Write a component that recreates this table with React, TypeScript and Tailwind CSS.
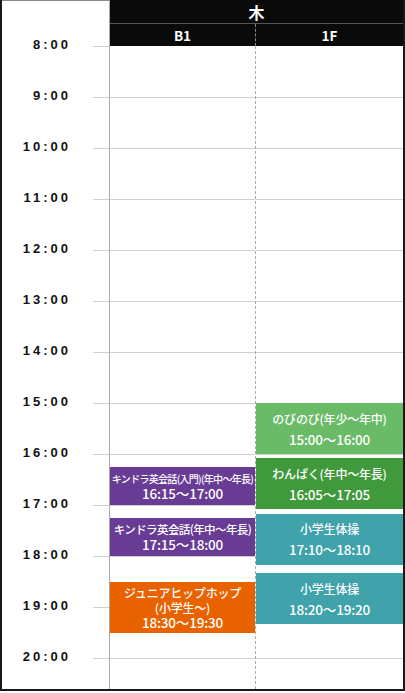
import React from 'react';

type Lesson = {
  title: string[];
  start: string;
  end: string;
  color: string;
  small?: boolean;
};

const HOUR_PX = 51;
const DAY_START = 8 * 60;

const toMin = (t: string) => {
  const [h, m] = t.split(':').map(Number);
  return h * 60 + m;
};

const b1: Lesson[] = [
  { title: ['キンドラ英会話(入門)(年中〜年長)'], start: '16:15', end: '17:00', color: 'bg-[#683c95]', small: true },
  { title: ['キンドラ英会話(年中〜年長)'], start: '17:15', end: '18:00', color: 'bg-[#683c95]' },
  { title: ['ジュニアヒップホップ', '(小学生〜)'], start: '18:30', end: '19:30', color: 'bg-[#e96200]' },
];

const f1: Lesson[] = [
  { title: ['のびのび(年少〜年中)'], start: '15:00', end: '16:00', color: 'bg-[#6abb68]' },
  { title: ['わんぱく(年中〜年長)'], start: '16:05', end: '17:05', color: 'bg-[#40993b]' },
  { title: ['小学生体操'], start: '17:10', end: '18:10', color: 'bg-[#40a2ab]' },
  { title: ['小学生体操'], start: '18:20', end: '19:20', color: 'bg-[#40a2ab]' },
];

const hours = [8, 9, 10, 11, 12, 13, 14, 15, 16, 17, 18, 19, 20];

function Column({ lessons, divider }: { lessons: Lesson[]; divider?: boolean }) {
  return (
    <div className={`relative ${divider ? 'w-[146px] border-r border-dashed border-[#aaa]' : 'flex-1'}`}>
      {hours.map((h) => (
        <div key={h} className="h-[51px] border-t border-[#d0d0d0] first:border-t-0" />
      ))}
      {lessons.map((l, i) => {
        const s = toMin(l.start);
        const e = toMin(l.end);
        const tight = e - s < 50;
        return (
          <div
            key={i}
            className={`absolute left-0 right-0 flex flex-col items-center justify-center overflow-hidden text-center text-white font-medium ${l.color} ${
              tight ? 'leading-[15px]' : l.title.length > 1 ? 'leading-[15px]' : 'leading-[20px]'
            }`}
            style={{ top: ((s - DAY_START) * HOUR_PX) / 60, height: ((e - s) * HOUR_PX) / 60 }}
          >
            {l.title.map((t, j) => (
              <div
                key={j}
                className={`${l.small ? 'text-[10px] tracking-[-0.7px]' : tight ? 'text-[11.5px] tracking-[-0.6px]' : 'text-[12px] tracking-[-0.2px]'} whitespace-nowrap`}
              >
                {t}
              </div>
            ))}
            <div className="text-[13.5px] tracking-[-0.2px]">
              {l.start}〜{l.end}
            </div>
          </div>
        );
      })}
    </div>
  );
}

export default function App() {
  return (
    <div className="w-[405px] h-[693px] bg-white" style={{ fontFamily: '"Noto Sans CJK JP", "Noto Sans", sans-serif' }}>
      <div className="flex w-[405px] h-[691px] border-l-2 border-r-2 border-b-2 border-[#1a1a1a] overflow-hidden">
        <div className="w-[107px] shrink-0 border-t border-[#888] pt-[20px]">
          {hours.map((h) => (
            <div key={h} className="flex h-[51px] items-center">
              <span className="w-[69px] -mt-[4px] text-right text-[13px] font-bold tracking-[3px] text-[#111] [font-family:'Liberation_Sans',sans-serif]">
                {h}:00
              </span>
              <div className="ml-auto h-px w-[16px] bg-[#d0d0d0]" />
            </div>
          ))}
        </div>
        <div className="flex flex-1 flex-col border-l border-[#aaa]">
          <div className="bg-[#0a0a0a] text-white font-bold">
            <div className="flex h-[23px] items-center justify-center text-[16px]">木</div>
            <div className="h-px bg-[#555]" />
            <div className="flex h-[22px] text-[13.5px]">
              <div className="flex w-[146px] items-center justify-center border-r border-dashed border-[#888]">B1</div>
              <div className="flex flex-1 items-center justify-center">1F</div>
            </div>
          </div>
          <div className="flex flex-1">
            <Column lessons={b1} divider />
            <Column lessons={f1} />
          </div>
        </div>
      </div>
    </div>
  );
}
